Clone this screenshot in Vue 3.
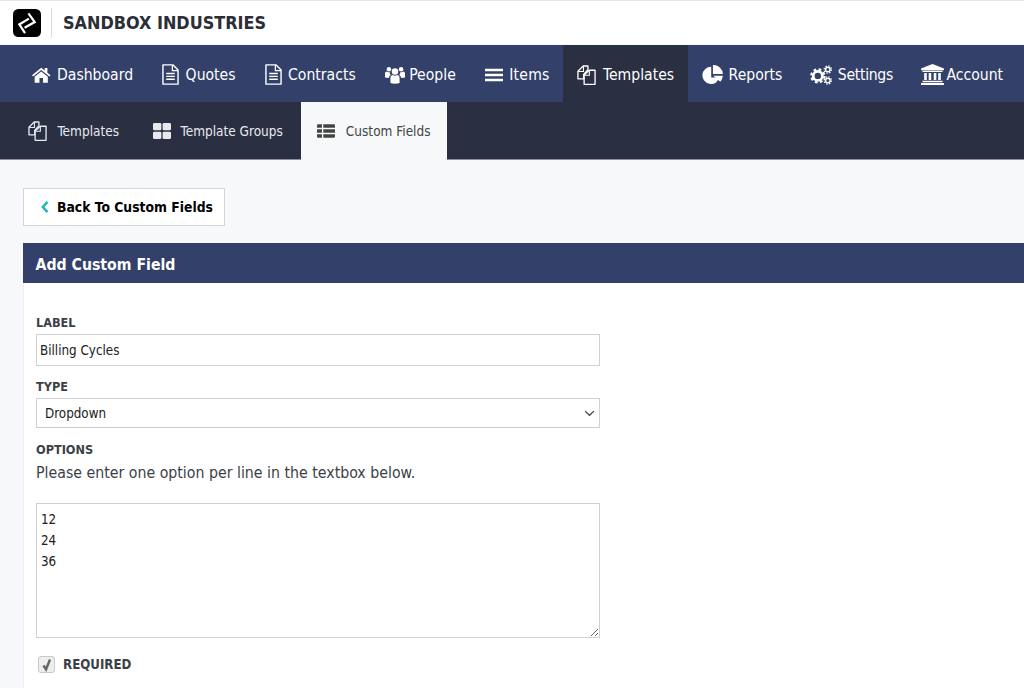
<template>
  <div class="page">
    <header class="brand">
      <span class="logo">
        <svg viewBox="0 0 29 29" width="28" height="28"><rect width="29" height="29" rx="5.500" fill="#000"/><path d="M16 4.500 22.500 13.500 12 19.500" fill="none" stroke="#fff" stroke-width="2.300"/><path d="M16.500 10 6.500 16 12.500 25" fill="none" stroke="#fff" stroke-width="2.300"/></svg>
      </span>
      <span class="brand-name">SANDBOX INDUSTRIES</span>
    </header>

    <nav class="nav">
      <a v-for="item in mainNav" :key="item.label" class="nav-item" :class="[item.icon, { active: item.active }]">
        <svg class="icon" :class="item.icon" :viewBox="icons[item.icon].box" v-html="icons[item.icon].body"></svg>
        <span>{{ item.label }}</span>
      </a>
    </nav>

    <nav class="subnav">
      <a v-for="item in subNav" :key="item.label" class="sub-item" :class="{ active: item.active }">
        <svg class="icon" :class="item.icon" :viewBox="icons[item.icon].box" v-html="icons[item.icon].body"></svg>
        <span>{{ item.label }}</span>
      </a>
    </nav>

    <main class="content">
      <button class="back">
        <svg viewBox="0 0 10 14" width="10" height="14"><path d="M7.500 1.800 2.800 7l4.700 5.200" fill="none" stroke="#1fb9bd" stroke-width="2.500"/></svg>
        <span>Back To Custom Fields</span>
      </button>

      <section class="panel">
        <h2 class="panel-title">Add Custom Field</h2>
        <div class="panel-body">
          <label class="field-label">LABEL</label>
          <input class="input" value="Billing Cycles" />
          <label class="field-label type">TYPE</label>
          <div class="select">
            <span>Dropdown</span>
            <svg viewBox="0 0 12 8" width="11" height="7"><path d="M1 1.300 6 6l5-4.700" fill="none" stroke="#444" stroke-width="1.500"/></svg>
          </div>
          <label class="field-label options">OPTIONS</label>
          <p class="hint">Please enter one option per line in the textbox below.</p>
          <textarea class="textarea" v-model="optionsText"></textarea>
          <div class="required">
            <span class="check">
              <svg viewBox="0 0 14 14" width="14" height="14"><path d="M3.500 7.500 6 11.500l4-10" fill="none" stroke="#666" stroke-width="2.400"/></svg>
            </span>
            <span class="req-label">REQUIRED</span>
          </div>
        </div>
      </section>
    </main>
  </div>
</template>

<script setup>
import { ref } from 'vue'

const optionsText = ref('12\n24\n36')

const icons = {
  home: {
    box: '0 0 24 22',
    body: '<path fill="currentColor" d="M12 1.500 0 11.300l1.500 1.700L12 4.400 22.500 13 24 11.300l-4-3.300V2h-3.500v3.100z"/><path fill="currentColor" d="M12 6.300 3.500 13.300V21h6.200v-6h4.600v6h6.200v-7.700z"/>'
  },
  doc: {
    box: '0 0 18 22',
    body: '<path d="M1 .8h10.500L17 6.300V21.200H1z" fill="none" stroke="currentColor" stroke-width="1.500" stroke-linejoin="round"/><path d="M11 1v6h6" fill="none" stroke="currentColor" stroke-width="1.300"/><path d="M4.500 10h9M4.500 13h9M4.500 16h9" stroke="currentColor" stroke-width="1.500"/>'
  },
  files: {
    box: '0 0 20 21',
    body: '<path d="M6.500 1H11.500V5L7 10v4.500H1V6.500z" fill="none" stroke="currentColor" stroke-width="1.400" stroke-linejoin="round"/><path d="M13 5.500h6v14.800H7.500V10.500z" fill="none" stroke="currentColor" stroke-width="1.400" stroke-linejoin="round"/><path d="M6.800 1v5.800H1.200M13 5.800v5H8" fill="none" stroke="currentColor" stroke-width="1.200"/>'
  },
  people: {
    box: '0 0 24 21',
    body: '<circle cx="12" cy="6.300" r="3.900" fill="currentColor"/><circle cx="4.700" cy="3.600" r="2.700" fill="currentColor"/><circle cx="19.300" cy="3.600" r="2.700" fill="currentColor"/><path fill="currentColor" d="M6.500 20v-6c0-2.200 1.500-3.500 3-3.500 1.600 1.100 3.400 1.100 5 0 1.500 0 3 1.300 3 3.500v6c-3.500 1.300-7.500 1.300-11 0z"/><path fill="currentColor" d="M0 13.500V9c0-1.600 1-2.700 2-2.700 1 .9 2.300 1.100 3.800.6-.3 1.500.2 2.600 1.200 3.500-1.400.8-2.200 2-2.400 3.600zM24 13.500V9c0-1.600-1-2.700-2-2.700-1 .9-2.300 1.100-3.800.6.300 1.500-.2 2.600-1.200 3.500 1.400.8 2.200 2 2.400 3.600z"/>'
  },
  bars: {
    box: '0 0 22 22',
    body: '<path fill="currentColor" d="M0 3.500h22v3H0zM0 9.500h22v3H0zM0 15.500h22v3H0z"/>'
  },
  pie: {
    box: '0 0 24 22',
    body: '<path fill="currentColor" d="M10.500 2A10 10 0 1 0 20 14.500H10.500z"/><path fill="currentColor" d="M12.500 0A10.800 10.800 0 0 1 24 10.500H12.500z"/><path fill="currentColor" d="M13 12.500H24a11 11 0 0 1-3 6.800z"/>'
  },
  cogs: {
    box: '0 0 24 22',
    body: '<circle cx="8.500" cy="12" r="5" fill="none" stroke="currentColor" stroke-width="3"/><circle cx="8.500" cy="12" r="7" fill="none" stroke="currentColor" stroke-width="2.800" stroke-dasharray="2.900 2.600"/><circle cx="19.500" cy="5" r="2.500" fill="none" stroke="currentColor" stroke-width="1.600"/><circle cx="19.500" cy="5" r="4" fill="none" stroke="currentColor" stroke-width="1.500" stroke-dasharray="1.500 1.640"/><circle cx="19.500" cy="17" r="2.500" fill="none" stroke="currentColor" stroke-width="1.600"/><circle cx="19.500" cy="17" r="4" fill="none" stroke="currentColor" stroke-width="1.500" stroke-dasharray="1.500 1.640"/>'
  },
  bank: {
    box: '0 0 24 22',
    body: '<path fill="currentColor" d="M12 0 24 4.800V6.500H0V4.800zM1.500 7.200h21v1.300h-21zM3.300 9.300h2.700v7.500H3.300zM8 9.300h2.700v7.500H8zM13.300 9.300H16v7.500h-2.700zM18 9.300h2.700v7.500H18zM1.500 17.500h21V19h-21zM0 20h24v2H0z"/>'
  },
  grid: {
    box: '0 0 20 20',
    body: '<rect x="0" y="1" width="9.300" height="8.300" rx="1.500" fill="currentColor"/><rect x="10.700" y="1" width="9.300" height="8.300" rx="1.500" fill="currentColor"/><rect x="0" y="10.700" width="9.300" height="8.300" rx="1.500" fill="currentColor"/><rect x="10.700" y="10.700" width="9.300" height="8.300" rx="1.500" fill="currentColor"/>'
  },
  list: {
    box: '0 0 20 20',
    body: '<path fill="currentColor" d="M0 4a1.500 1.500 0 0 1 1.500-1.500h4v4H0zM7 2.500h11.500A1.500 1.500 0 0 1 20 4v2.500H7zM0 8h5.500v4H0zM7 8h13v4H7zM0 13.500h5.500v4h-4A1.500 1.500 0 0 1 0 16zM7 13.500h13V16a1.500 1.500 0 0 1-1.500 1.500H7z"/>'
  }
}

const mainNav = [
  { label: 'Dashboard', icon: 'home' },
  { label: 'Quotes', icon: 'doc' },
  { label: 'Contracts', icon: 'doc' },
  { label: 'People', icon: 'people' },
  { label: 'Items', icon: 'bars' },
  { label: 'Templates', icon: 'files', active: true },
  { label: 'Reports', icon: 'pie' },
  { label: 'Settings', icon: 'cogs' },
  { label: 'Account', icon: 'bank' }
]
const subNav = [
  { label: 'Templates', icon: 'files' },
  { label: 'Template Groups', icon: 'grid' },
  { label: 'Custom Fields', icon: 'list', active: true }
]
</script>

<style>
html, body { margin: 0; background: #f7f8fa; }
</style>

<style scoped>
.page {
  height: 688px;
  overflow: hidden;
  background: #f7f8fa;
  font-family: "DejaVu Sans Condensed", "DejaVu Sans", sans-serif;
  font-stretch: condensed;
}
.brand {
  height: 44px;
  box-sizing: border-box;
  border-top: 1px solid #e4e4e4;
  background: #fff;
  display: flex;
  align-items: center;
  padding-left: 12.5px;
}
.logo { display: flex; padding-right: 10.5px; border-right: 1px solid #dcdcdc; height: 30px; align-items: center; }
.brand-name { margin-left: 11px; font-size: 17.85px; font-weight: 700; color: #2b2e36; }
.nav {
  height: 57px;
  margin-top: 1px;
  background: #334069;
  display: flex;
  padding-left: 18px;
}
.nav-item {
  display: flex;
  align-items: center;
  gap: 6.5px;
  padding: 2px 14px 0;
  margin-right: 1px;
  color: #fff;
  font-size: 15.6px;
}
.nav-item.bars { margin-right: -1px; letter-spacing: 0.2px; }
.nav-item.active { background: #2a2f42; margin-right: 0; }
.nav-item.pie { margin-right: 0; }
.nav-item.cogs { letter-spacing: -0.3px; margin-right: 0; }
.icon { flex: none; width: 19px; height: 19px; }
.icon.home { width: 18.5px; height: 18px; }
.icon.doc { width: 17px; height: 21px; }
.icon.people { width: 20px; height: 18px; margin-right: -2px; }
.icon.bars { width: 18px; height: 18px; }
.icon.files { width: 19px; height: 20px; margin-right: 1px; }
.icon.pie { width: 21px; height: 19px; margin-right: -1px; }
.icon.cogs { width: 22px; height: 20px; margin-right: -1px; }
.icon.bank { width: 23px; height: 21px; margin-right: -4px; }
.subnav {
  height: 58px;
  box-sizing: border-box;
  background: #2a2f42;
  border-bottom: 1px solid #8a8fa0;
  display: flex;
  padding-left: 14px;
}
.sub-item {
  display: flex;
  align-items: center;
  gap: 9.5px;
  padding: 0 14px;
  margin-right: 6px;
  color: #e8e9ee;
  font-size: 13.5px;
}
.sub-item .icon.grid, .sub-item .icon.list { width: 18px; height: 18px; }
.sub-item.active {
  background: #f7f8fa;
  color: #444;
  height: 58px;
  margin-left: -2px;
  margin-right: 0;
  padding: 0 16px;
  gap: 11px;
}
.content { padding: 28px 0 0 23px; }
.back {
  display: flex;
  align-items: center;
  gap: 7px;
  width: 202px;
  height: 38px;
  box-sizing: border-box;
  padding: 0 0 0 16px;
  background: #fff;
  border: 1px solid #d4d5d8;
  font: inherit;
  font-size: 13.8px;
  font-weight: 700;
  color: #000;
}
.panel { margin-top: 17px; background: #fff; border-left: 1px solid #eceef1; }
.panel-title {
  margin: 0 0 0 -1px;
  height: 40px;
  line-height: 43px;
  padding-left: 12.5px;
  background: #334069;
  color: #fff;
  font-size: 15.7px;
  font-weight: 700;
}
.panel-body { padding: 33px 0 60px 12px; }
.field-label { display: block; font-size: 12.6px; font-weight: 700; color: #3c3f46; line-height: 14px; margin-bottom: 4px; }
.field-label.type { margin-top: 14px; margin-bottom: 4px; }
.field-label.options { margin-top: 15px; margin-bottom: 0; }
.input, .select, .textarea {
  display: block;
  width: 564px;
  box-sizing: border-box;
  border: 1px solid #cfd0d2;
  background: #fff;
  font: inherit;
  font-size: 13.3px;
  color: #222;
  outline: none;
  border-radius: 0;
  margin: 0;
}
.input { height: 32px; padding: 0 3px; }
.select { height: 30px; padding: 1px 4px 0 8px; display: flex; align-items: center; justify-content: space-between; }
.hint { margin: 7px 0 21px; font-size: 15.75px; line-height: 18px; color: #3c3f46; }
.textarea { height: 135px; padding: 5px 4px; line-height: 21px; }
.required { display: flex; align-items: center; gap: 8px; margin: 18px 0 0 2px; }
.check {
  width: 17px;
  height: 17px;
  box-sizing: border-box;
  border: 1px solid #c9c9c9;
  border-radius: 3px;
  background: #eee;
  display: flex;
  align-items: center;
  justify-content: center;
}
.req-label { font-size: 13.2px; font-weight: 700; color: #3c3f46; }
</style>
